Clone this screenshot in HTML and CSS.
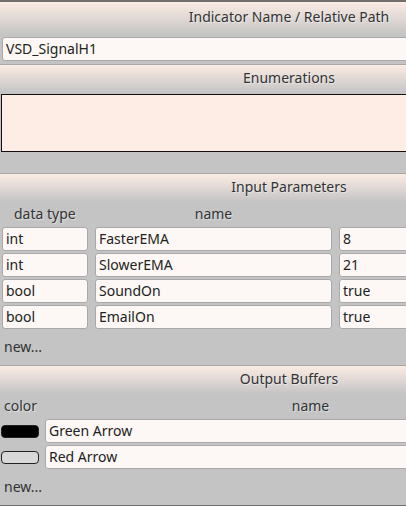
FILE: index.html
```html
<!DOCTYPE html>
<html lang="en">
    <head>
        <meta charset="utf-8" />
        <title>Indicator Wizard</title>
        <link rel="stylesheet" href="styles.css">
    </head>
    <body>
        <div id="app">
            <section class="panel first">
                <div class="panel-head">Indicator Name / Relative Path</div>
                <div class="field name-field">VSD_SignalH1</div>
            </section>

            <section class="panel">
                <div class="panel-head">Enumerations</div>
                <div class="enum-box"></div>
            </section>

            <section class="panel">
                <div class="panel-head">Input Parameters</div>
                <div class="params">
                    <span class="label">data type</span>
                    <span class="label center">name</span>
                    <span class="label"></span>

                    <div class="field">int</div>
                    <div class="field">FasterEMA</div>
                    <div class="field">8</div>

                    <div class="field">int</div>
                    <div class="field">SlowerEMA</div>
                    <div class="field">21</div>

                    <div class="field">bool</div>
                    <div class="field">SoundOn</div>
                    <div class="field">true</div>

                    <div class="field">bool</div>
                    <div class="field">EmailOn</div>
                    <div class="field">true</div>
                </div>
                <div class="new">new...</div>
            </section>

            <section class="panel last">
                <div class="panel-head">Output Buffers</div>
                <div class="buffers">
                    <span class="label">color</span>
                    <span class="label center">name</span>

                    <div class="swatch black"></div>
                    <div class="field">Green Arrow</div>

                    <div class="swatch empty"></div>
                    <div class="field">Red Arrow</div>
                </div>
                <div class="new">new...</div>
            </section>
        </div>
    </body>
</html>
```

FILE: styles.css
```css
html, body {
    margin: 0;
    padding: 0;
    overflow: hidden;
    background-color: #c4c4c4;
}

#app {
    width: 578px;
    border-top: 2px solid #6f6f6f;
    font-family: "Noto Sans", "Open Sans", sans-serif;
    font-size: 14px;
    color: #333;
}

.panel {
    border-top: 1px solid #a8a8a8;
}

.panel.first {
    border-top: none;
    padding-bottom: 3px;
}

.panel.last {
    border-bottom: 2px solid #6f6f6f;
}

.panel-head {
    height: 28px;
    line-height: 26px;
    text-align: center;
    background: linear-gradient(#fbece4, #c4c4c4);
    text-shadow: 1px 1px 1px rgba(255, 255, 255, 0.5);
}

.first .panel-head {
    height: 33px;
    line-height: 30px;
}

.label {
    padding-top: 2px;
    margin-bottom: 1px;
    line-height: 20px;
    text-shadow: 1px 1px 1px rgba(255, 255, 255, 0.5);
}

.label.center {
    text-align: center;
}

.field {
    height: 22px;
    line-height: 22px;
    padding: 0 3px;
    background-color: #fdf8f5;
    border: 1px solid #a9a9a9;
    border-radius: 3px;
    color: #222;
    white-space: nowrap;
}

.name-field {
    margin: 2px 2px 0 2px;
}

.enum-box {
    height: 56px;
    margin: 1px 0 21px 1px;
    background-color: #fdede5;
    border: 1px solid #111;
}

.params {
    display: grid;
    grid-template-columns: 86px 237px 237px;
    column-gap: 7px;
    row-gap: 2px;
    padding-left: 2px;
}

.params .label:first-child {
    padding-left: 12px;
}

.buffers {
    display: grid;
    grid-template-columns: 38px 531px;
    column-gap: 6px;
    row-gap: 2px;
    padding-left: 1px;
}

.buffers .label:first-child {
    padding-left: 3px;
}

.swatch {
    height: 11px;
    align-self: center;
    border: 1px solid #222;
    border-radius: 4px;
}

.swatch.black {
    background-color: #000;
}

.swatch.empty {
    background-color: #d9d9d9;
}

.new {
    padding: 8px 4px;
    line-height: 20px;
}
```
